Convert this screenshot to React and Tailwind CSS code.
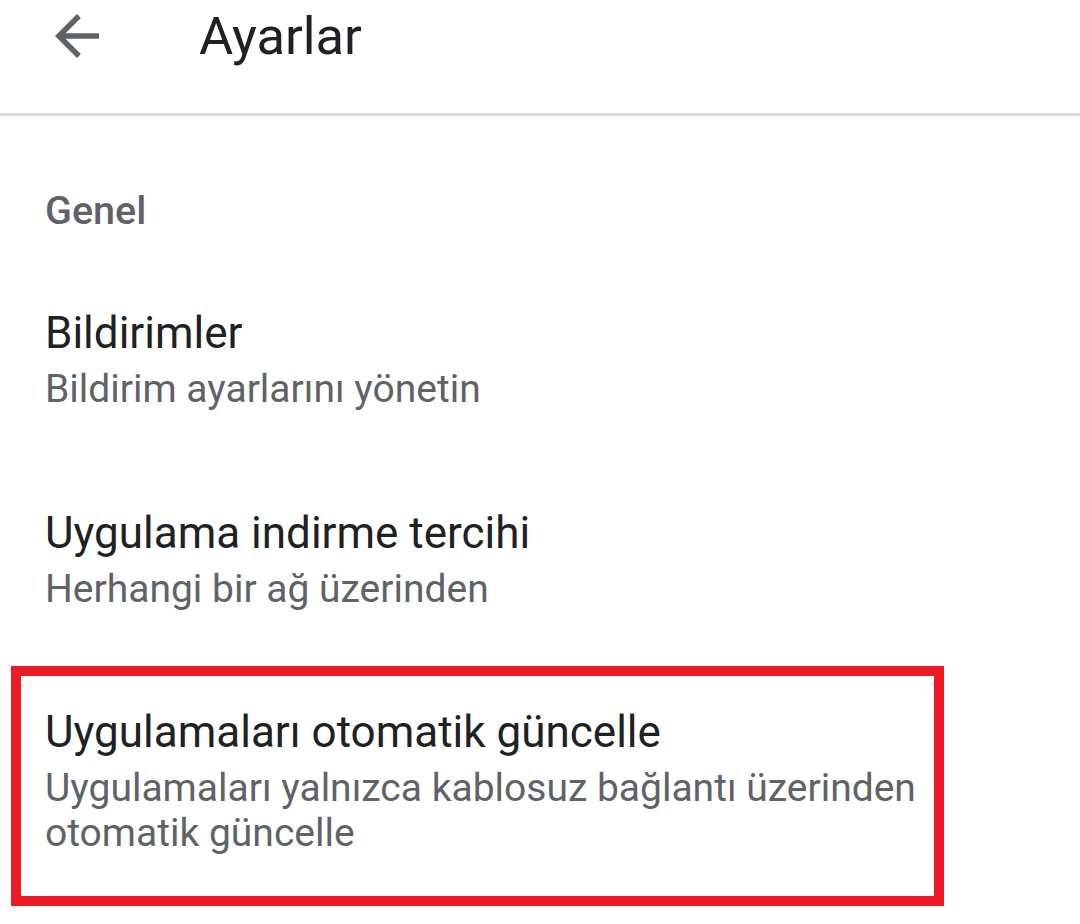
export default function App() {
  return (
    <div className="w-[1080px] h-[924px] bg-white overflow-hidden" style={{ fontFamily: "Roboto, 'Noto Sans', sans-serif" }}>
      <div className="flex items-start h-[116px] border-b-[3px] border-[#dadce0]">
        <svg className="ml-[44px] mt-[3px]" width="66" height="66" viewBox="0 0 24 24" fill="#5f6368">
          <path d="M20 11H7.83l5.59-5.59L12 4l-8 8 8 8 1.41-1.41L7.83 13H20v-2z" />
        </svg>
        <div className="ml-[89px] mt-[6px] text-[52.5px] leading-[60px] text-[#202124]">Ayarlar</div>
      </div>
      <div className="pt-[71px]">
        <div className="pl-[45px] text-[39.5px] leading-[48px] font-medium text-[#5f6368]">Genel</div>
        <div className="pl-[45px] mt-[70px]">
          <div className="text-[44px] leading-[56px] text-[#202124]">Bildirimler</div>
          <div className="mt-[6px] text-[39px] leading-[45px] text-[#5f6368]">Bildirim ayarlarını yönetin</div>
        </div>
        <div className="pl-[45px] mt-[93px]">
          <div className="text-[44px] leading-[56px] text-[#202124]">Uygulama indirme tercihi</div>
          <div className="mt-[6px] text-[39px] leading-[45px] text-[#5f6368]">Herhangi bir ağ üzerinden</div>
        </div>
        <div className="ml-[11px] mt-[54px] w-[933px] h-[240px] border-[10px] border-[#ed1c24] pl-[24px] pt-[28px]">
          <div className="text-[44px] leading-[56px] text-[#202124]">Uygulamaları otomatik güncelle</div>
          <div className="mt-[6px] text-[39px] leading-[45px] text-[#5f6368]">Uygulamaları yalnızca kablosuz bağlantı üzerinden<br />otomatik güncelle</div>
        </div>
      </div>
    </div>
  );
}
